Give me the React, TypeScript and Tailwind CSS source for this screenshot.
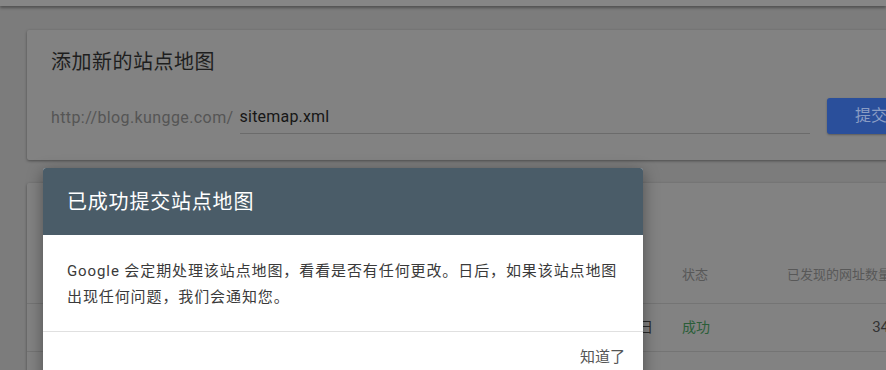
import React from "react";

const font = { fontFamily: "Roboto, 'Noto Sans CJK SC', sans-serif" };

export default function App() {
  return (
    <div
      className="relative w-[886px] h-[370px] overflow-hidden bg-[#7c7c7c]"
      style={font}
    >
      {/* top bar */}
      <div className="h-[6px] bg-[#868686] shadow-[0_2px_3px_rgba(0,0,0,0.35)]" />

      {/* add sitemap card */}
      <div className="ml-[27px] mt-[24px] w-[900px] h-[130px] bg-[#828282] rounded-[2px] shadow-[0_1px_3px_rgba(0,0,0,0.4)] pl-[24px] pt-[18px]">
        <h2 className="text-[20px] leading-[28px] tracking-[0.5px] text-[#1e1e1e] font-normal">
          添加新的站点地图
        </h2>
        <div className="flex items-center mt-[22px] h-[36px]">
          <span className="text-[16px] tracking-[0.4px] text-[#555555] pt-[4px]">
            http://blog.kungge.com/
          </span>
          <div className="ml-[6px] w-[571px] h-[36px] flex items-end border-b border-[#6b6b6b]">
            <span className="text-[16px] leading-[22px] pb-[5px] tracking-[0.2px] text-[#161616]">
              sitemap.xml
            </span>
          </div>
          <button className="ml-[17px] w-[100px] h-[36px] rounded-[3px] bg-[#2a4f9b] text-[#8a9dc4] text-[16px] text-left pl-[28px] shadow-[0_1px_2px_rgba(0,0,0,0.3)]">
            提交
          </button>
        </div>
      </div>

      {/* sitemaps table card */}
      <div className="ml-[27px] mt-[23px] w-[900px] h-[200px] bg-[#828282] rounded-[2px] shadow-[0_1px_3px_rgba(0,0,0,0.4)]">
        <div className="h-[52px] flex items-center justify-end pr-[12px]">
          <svg width="12" height="12" viewBox="0 0 12 12" className="mr-[-4px]">
            <path d="M6 1v10M1 6h10" stroke="#2a2a2a" strokeWidth="1.6" />
          </svg>
        </div>
        <div className="h-[69px] flex items-center pt-[11px] text-[13px] text-[#585858] border-b border-[#747474]">
          <div className="w-[454px] pl-[24px]">已提交的站点地图</div>
          <div className="w-[172px]">上次读取时间</div>
          <div className="w-[105px] ml-[29px]">状态</div>
          <div className="w-[102px] text-right whitespace-nowrap">已发现的网址数量</div>
        </div>
        <div className="h-[48px] flex items-center text-[14px] border-b border-[#747474]">
          <div className="w-[454px] pl-[24px] text-[#2a2a2a]">/sitemap.xml</div>
          <div className="w-[172px] text-right text-[#2a2a2a]">2018年3月9日</div>
          <div className="w-[105px] ml-[29px] text-[#2a5e38]">成功</div>
          <div className="w-[102px] text-right text-[15px] text-[#333333]">34</div>
        </div>
      </div>

      {/* success dialog */}
      <div className="absolute left-[43px] top-[168px] w-[600px] rounded-t-[3px] overflow-hidden bg-white shadow-[0_4px_16px_rgba(0,0,0,0.4)]">
        <div className="h-[67px] bg-[#4a5c68] flex items-center pl-[24px]">
          <h3 className="text-[20px] tracking-[0.8px] text-white font-normal">
            已成功提交站点地图
          </h3>
        </div>
        <div className="pl-[24px] pr-[20px] pt-[23px] pb-[21px] text-[15px] leading-[26px] tracking-[0.9px] text-[#3a3a3a] whitespace-nowrap border-b border-[#e0e0e0]">
          <p>Google 会定期处理该站点地图，看看是否有任何更改。日后，如果该站点地图</p>
          <p>出现任何问题，我们会通知您。</p>
        </div>
        <div className="flex justify-end pr-[18px] pt-[15px] pb-[15px]">
          <button className="text-[15px] leading-[20px] text-[#555555]">知道了</button>
        </div>
      </div>
    </div>
  );
}
